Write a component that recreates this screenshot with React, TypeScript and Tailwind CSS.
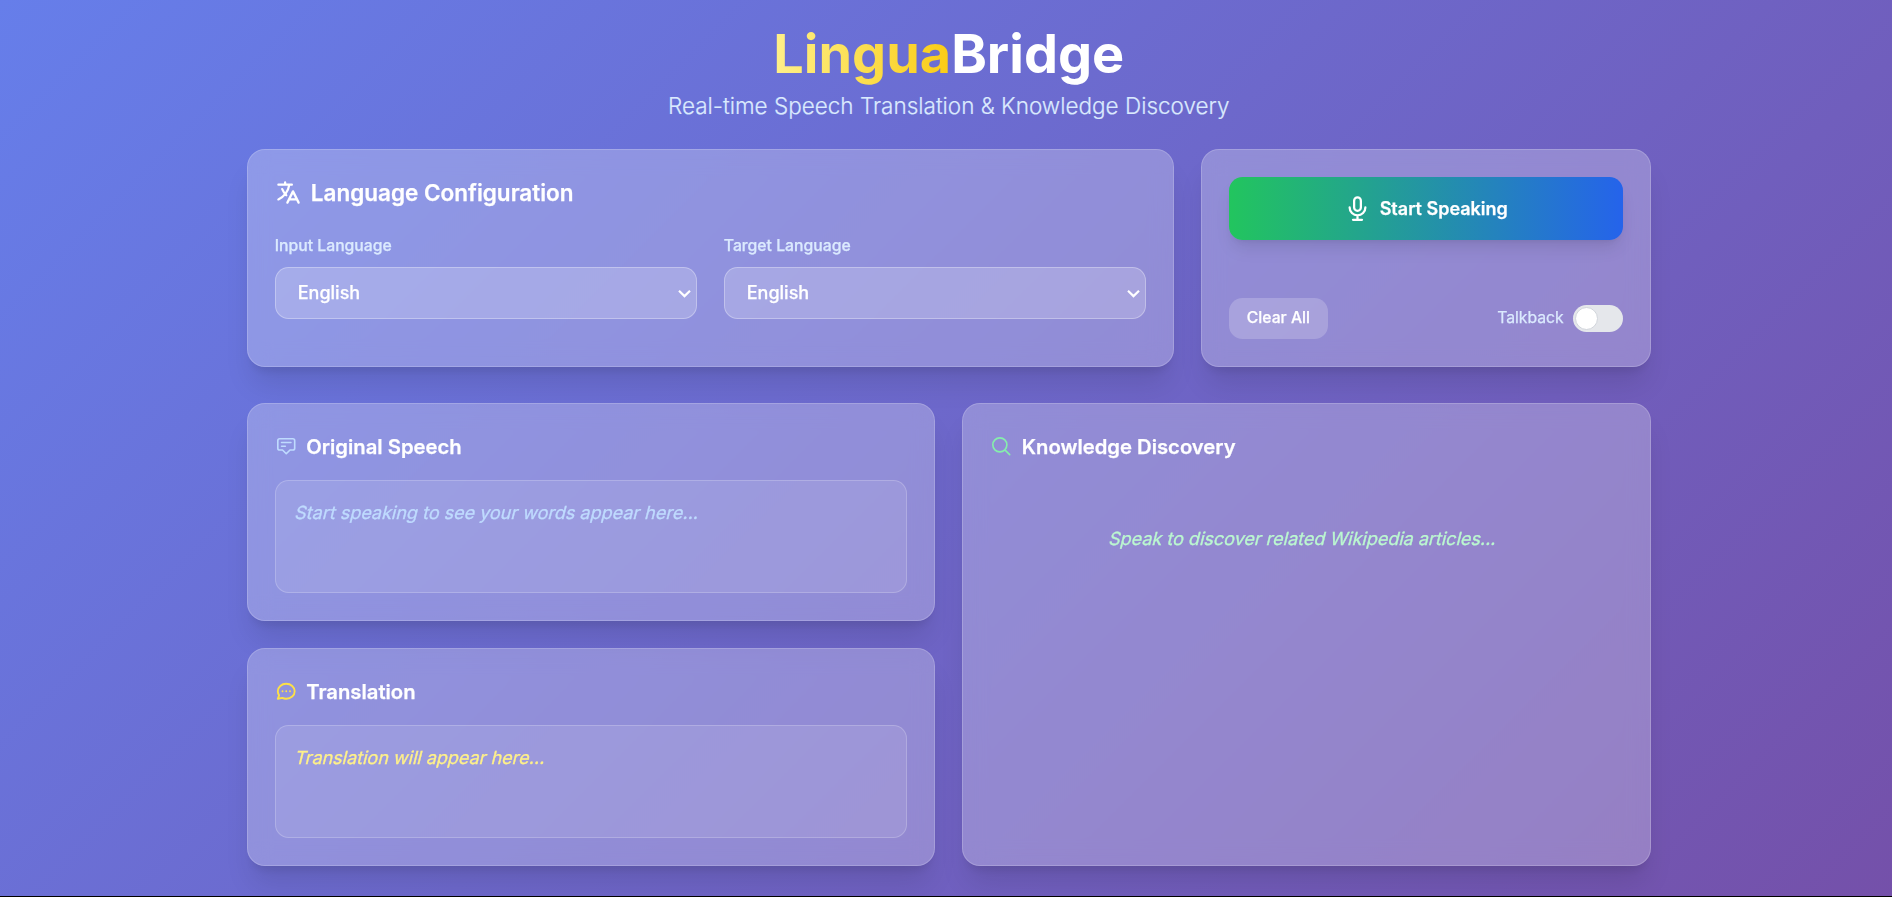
import { useState } from "react";
import type { ReactNode } from "react";

const languages = ["English", "Spanish", "French", "German", "Hindi", "Japanese"];

const paths = {
  language:
    "M3 5h12M9 3v2m1.048 9.5A18.022 18.022 0 016.412 9m6.088 9h7M11 21l5-10 5 10M12.751 5C11.783 10.77 8.07 15.61 3 18.129",
  mic: "M19 11a7 7 0 01-7 7m0 0a7 7 0 01-7-7m7 7v4m0 0H8m4 0h4m-4-8a3 3 0 01-3-3V5a3 3 0 116 0v6a3 3 0 01-3 3z",
  speech:
    "M7 8h10M7 12h4m1 8l-4-4H5a2 2 0 01-2-2V6a2 2 0 012-2h14a2 2 0 012 2v8a2 2 0 01-2 2h-3l-4 4z",
  chat: "M8 12h.01M12 12h.01M16 12h.01M21 12c0 4.418-4.03 8-9 8a9.863 9.863 0 01-4.255-.949L3 20l1.395-3.72C3.512 15.042 3 13.574 3 12c0-4.418 4.03-8 9-8s9 3.582 9 8z",
  search: "M21 21l-5.197-5.197m0 0A7.5 7.5 0 105.196 5.196a7.5 7.5 0 0010.607 10.607z",
};

function Icon({ name, className, weight = 2 }: { name: keyof typeof paths; className: string; weight?: number }) {
  return (
    <svg
      className={`mr-2 shrink-0 ${className}`}
      viewBox="0 0 24 24"
      fill="none"
      stroke="currentColor"
      strokeWidth={weight}
      strokeLinecap="round"
      strokeLinejoin="round"
    >
      <path d={paths[name]} />
    </svg>
  );
}

function Card({ className = "", children }: { className?: string; children: ReactNode }) {
  return (
    <section
      className={`rounded-[18px] border border-white/[0.18] bg-white/25 p-6 shadow-[0_22.5px_28px_-5.6px_rgba(0,0,0,0.1),0_9px_11px_-6.75px_rgba(0,0,0,0.1)] backdrop-blur-[11px] ${className}`}
    >
      {children}
    </section>
  );
}

function LanguageSelect({ label }: { label: string }) {
  return (
    <label className="block">
      <span className="mb-2 block text-[15.75px] leading-[22.5px] font-medium text-[#dbeafe]">{label}</span>
      <span className="relative block">
        <select className="block h-[52px] w-full appearance-none rounded-[13.5px] border border-white/30 bg-white/20 px-[22px] pb-px text-[18px] leading-[27px] font-medium text-white">
          {languages.map((language) => (
            <option key={language} className="text-gray-800">
              {language}
            </option>
          ))}
        </select>
        <svg
          className="pointer-events-none absolute top-[22px] right-[6px] h-[9px] w-[13px]"
          viewBox="0 0 13 9"
          fill="none"
          stroke="white"
          strokeWidth="2.2"
        >
          <path d="M1 1.8L6.5 7.1L12 1.8" />
        </svg>
      </span>
    </label>
  );
}

function PanelTitle({
  icon,
  color,
  weight,
  children,
}: {
  icon: keyof typeof paths;
  color: string;
  weight?: number;
  children: ReactNode;
}) {
  return (
    <h3 className="mb-4 flex items-center text-[20.25px] leading-[31.5px] font-semibold text-white">
      <Icon name={icon} className={`h-5 w-5 ${color}`} weight={weight} />
      {children}
    </h3>
  );
}

function Hint({ className, children }: { className: string; children: ReactNode }) {
  return (
    <p className={`text-[18px] leading-[27px] [-webkit-text-stroke:0.3px] ${className}`}>
      <span className="inline-block origin-[0_20px] -skew-x-[14deg]">{children}</span>
    </p>
  );
}

function TextPanel({ children }: { children: ReactNode }) {
  return (
    <div className="h-[112.5px] rounded-[13.5px] border border-white/20 bg-white/10 p-4">{children}</div>
  );
}

export default function App() {
  const [talkback, setTalkback] = useState(false);
  return (
    <div className="h-[897px] w-full overflow-hidden bg-black font-['Inter',sans-serif] [--spacing:4.5px]">
      <main className="h-[896px] w-[1897.5px] overflow-hidden bg-[linear-gradient(135deg,#667eea_0%,#764ba2_100%)] bg-[length:1897.5px_1220px] bg-no-repeat">
        <div className="mx-auto w-[1440px] px-4 py-6">
          <header className="mb-6 text-center">
            <h1 className="mb-2 text-[54px] leading-[54px] font-bold text-white">
              <span className="bg-[linear-gradient(to_right,#fef08a,#facc15)] bg-clip-text text-transparent">Lingua</span>Bridge
            </h1>
            <p className="text-[22.5px] leading-[31.5px] font-light text-[#dbeafe] [-webkit-text-stroke:0.2px]">
              Real-time Speech Translation &amp; Knowledge Discovery
            </p>
          </header>

          <div className="mb-8 grid h-[218.25px] grid-cols-3 gap-6 [-webkit-text-stroke:0.25px]">
            <Card className="col-span-2">
              <h2 className="mb-6 flex items-center text-[22.5px] leading-[31.5px] font-semibold text-white">
                <Icon name="language" className="h-6 w-6" />
                Language Configuration
              </h2>
              <div className="grid grid-cols-2 gap-6">
                <LanguageSelect label="Input Language" />
                <LanguageSelect label="Target Language" />
              </div>
            </Card>

            <Card className="flex flex-col justify-between">
              <button className="flex items-center justify-center rounded-[13.5px] bg-[linear-gradient(to_right,#22c55e,#2563eb)] py-4 text-[18px] leading-[27px] font-semibold text-white shadow-[0_11.25px_17px_-3.4px_rgba(0,0,0,0.1),0_4.5px_6.75px_-4.5px_rgba(0,0,0,0.1)]">
                <Icon name="mic" className="h-6 w-6" />
                Start Speaking
              </button>
              <div className="flex items-center justify-between">
                <button className="rounded-[13.5px] bg-white/20 px-4 py-2 text-[15.75px] leading-[22.5px] font-medium text-white">
                  Clear All
                </button>
                <div className="flex items-center gap-2">
                  <span className="text-[15.75px] leading-[22.5px] text-[#dbeafe]">Talkback</span>
                  <button
                    role="switch"
                    aria-checked={talkback}
                    aria-label="Talkback"
                    onClick={() => setTalkback(!talkback)}
                    className={`flex h-6 w-[50px] items-center rounded-full px-0.5 ${talkback ? "justify-end bg-[#2563eb]" : "bg-[#e5e7eb]"}`}
                  >
                    <span className="h-5 w-5 rounded-full border border-[#d1d5db] bg-white" />
                  </button>
                </div>
              </div>
            </Card>
          </div>

          <div className="grid grid-cols-2 gap-6 [-webkit-text-stroke:0.25px]">
            <div className="flex flex-col gap-6">
              <Card>
                <PanelTitle icon="speech" color="text-[#bfdbfe]" weight={1.75}>
                  Original Speech
                </PanelTitle>
                <TextPanel>
                  <Hint className="text-[#bfdbfe]">Start speaking to see your words appear here...</Hint>
                </TextPanel>
              </Card>
              <Card>
                <PanelTitle icon="chat" color="text-[#fde047]">Translation</PanelTitle>
                <TextPanel>
                  <Hint className="text-[#fef08a]">Translation will appear here...</Hint>
                </TextPanel>
              </Card>
            </div>
            <Card>
              <PanelTitle icon="search" color="text-[#86efac]" weight={1.75}>
                Knowledge Discovery
              </PanelTitle>
              <Hint className="pt-10 pr-2 text-center text-[#bbf7d0]">
                Speak to discover related Wikipedia articles...
              </Hint>
            </Card>
          </div>
        </div>
      </main>
    </div>
  );
}
